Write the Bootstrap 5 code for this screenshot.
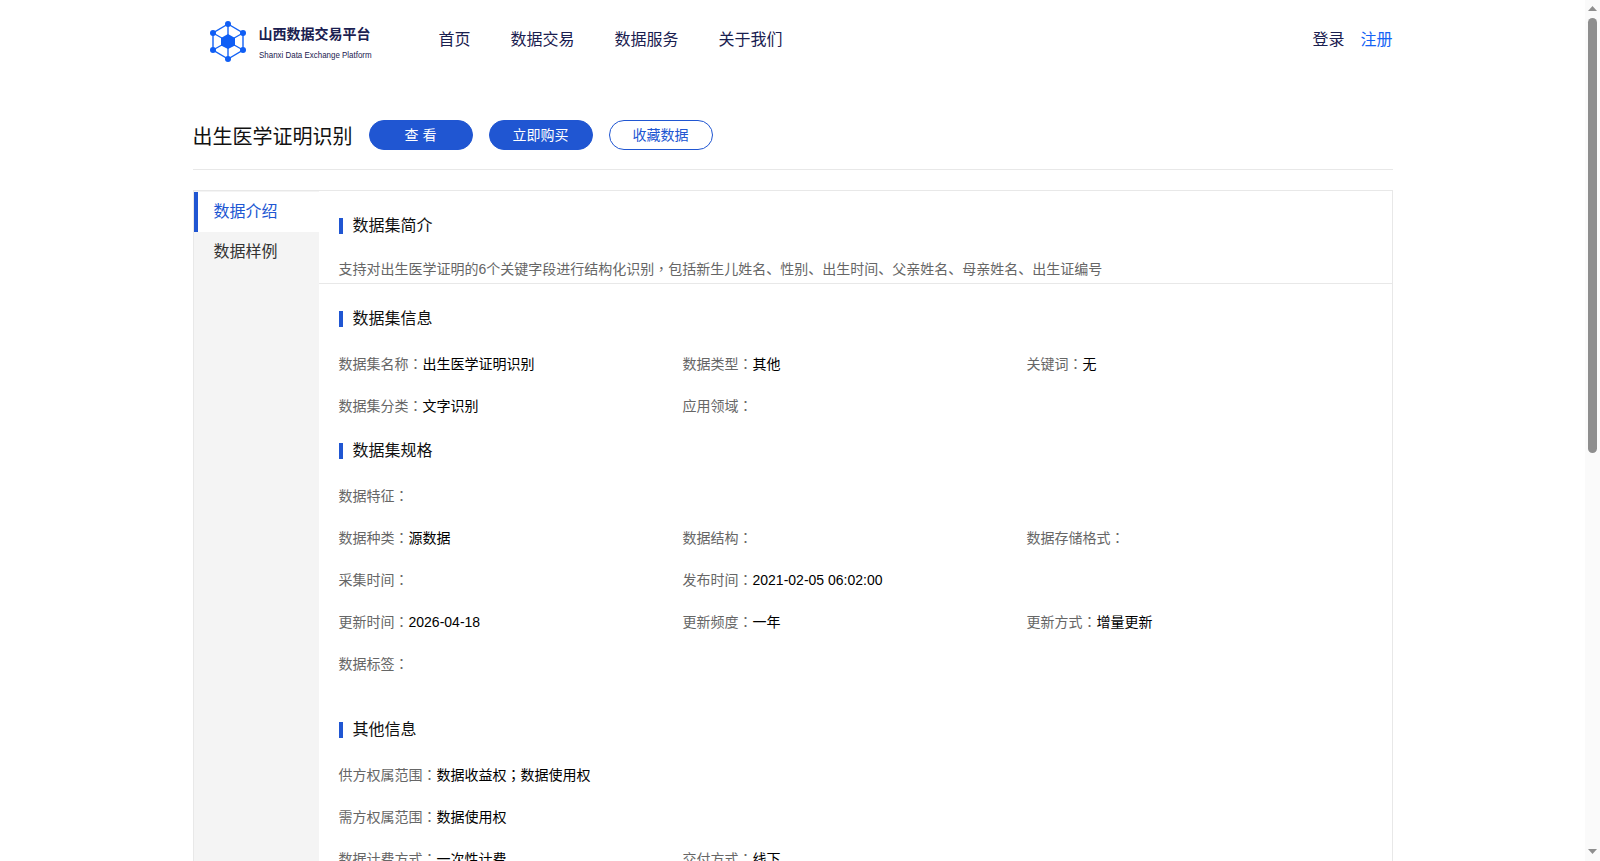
<!DOCTYPE html>
<html>
<head>
  <meta charset="UTF-8" />
  <meta name="viewport" content="width=device-width, initial-scale=1" />
  <title>出生医学证明识别 – 山西数据交易平台</title>
  <link href="https://cdn.jsdelivr.net/npm/bootstrap@5.3.0/dist/css/bootstrap.min.css" rel="stylesheet">
  <style>
    body {
      font-family: "Liberation Sans", "Noto Sans CJK SC", sans-serif;
      font-size: 14px;
      color: #000;
      background: #fff;
      padding-right: 15px;
    }

    .page-wrap { width: 1200px; margin: 0 auto; }

    .top-bar { height: 80px; }
    .brand-logo { width: 200px; padding-left: 17px; gap: 13px; }
    .brand-logo svg { margin-top: 2px; flex: none; }
    .brand-name { font-size: 14px; font-weight: 700; color: #1a2050; line-height: 18px; margin-top: 6px; }
    .brand-en { font-size: 9.7px; color: #1a2050; line-height: 12px; margin-top: 6px; white-space: nowrap; transform: scaleX(.82); transform-origin: left center; }

    .top-nav { margin-left: 46px; gap: 40px; }
    .top-nav a { font-size: 16px; color: #1a2050; text-decoration: none; }
    .auth-links { gap: 16px; }
    .auth-links a { font-size: 16px; color: #1a2050; text-decoration: none; }
    .auth-links a.reg { color: #1463f5; }

    .title-row { height: 90px; padding-top: 40px; border-bottom: 1px solid #e8e8e8; gap: 16px; }
    .title-row h1 { font-size: 20px; font-weight: 400; margin: 0; line-height: 34px; color: #111; }
    .pill-btn {
      width: 104px; height: 30px; padding: 0; font-size: 14px; line-height: 28px;
      border-radius: 15px; border: 1px solid #2056d2; background: #2056d2; color: #fff;
    }
    .pill-btn.plain { background: #fff; color: #2056d2; }

    .detail-box { margin-top: 20px; border: 1px solid #e8e8e8; border-bottom: 0; }
    .side-menu { width: 125px; background: #f4f4f4; flex: none; padding-top: 1px; }
    .side-menu a { display: block; height: 40px; line-height: 40px; padding-left: 16px; font-size: 16px; color: #333; text-decoration: none; border-left: 4px solid transparent; }
    .side-menu a.on { background: #fff; color: #2056d2; border-left-color: #2056d2; }

    .detail-main { flex: 1; min-width: 0; }
    .sec-block { padding: 27px 20px 0; }
    .sec-block.ruled { border-bottom: 1px solid #e8e8e8; }
    .sec-block.tight { padding-top: 16px; }
    .sec-block.wide { padding-top: 37px; }
    .sec-title { font-size: 16px; line-height: 16px; color: #111; border-left: 4px solid #2056d2; padding-left: 10px; margin: 0 0 16px; font-weight: 400; height: 16px; }
    .sec-text { color: #666; margin: 24px 0 3px; line-height: 21px; }
    .info-row { height: 42px; align-items: center; }
    .info-cell { width: 344px; flex: none; color: #666; white-space: nowrap; }
    .info-cell span { color: #000; }
    /* this face centres full-width punctuation like the reference does */
    .info-cell i, .sec-text i { font-family: "Noto Sans CJK TC", sans-serif; font-style: normal; }

    .fake-scroll { position: fixed; top: 0; right: 0; bottom: 0; width: 15px; background: #fafafa; }
    .fake-scroll .thumb { position: absolute; left: 3px; top: 18px; width: 9px; height: 435px; border-radius: 5px; background: #8e8e8e; }
    .fake-scroll svg { position: absolute; left: 3px; }
  </style>
</head>
<body>

  <div class="page-wrap">
    <div class="top-bar d-flex align-items-center">
      <div class="brand-logo d-flex align-items-center">
        <svg width="36" height="41" viewBox="0 0 36 41" fill="none">
          <g stroke="#1463f5" stroke-width="1.4">
            <polygon points="18,3 33,12 33,29 18,38 3,29 3,12"/>
            <path d="M18 3V38M3 12L33 29M33 12L3 29"/>
          </g>
          <polygon points="18,13 25,17 25,24.500 18,28 11,24.500 11,17" fill="#0f5ef5"/>
          <g fill="#0f5ef5">
            <circle cx="18" cy="3" r="3"/><circle cx="33" cy="12" r="3"/><circle cx="33" cy="29" r="3"/>
            <circle cx="18" cy="38" r="3"/><circle cx="3" cy="29" r="3"/><circle cx="3" cy="12" r="3"/>
          </g>
        </svg>
        <div>
          <div class="brand-name">山西数据交易平台</div>
          <div class="brand-en">Shanxi Data Exchange Platform</div>
        </div>
      </div>
      <nav class="top-nav d-flex">
        <a href="#">首页</a>
        <a href="#">数据交易</a>
        <a href="#">数据服务</a>
        <a href="#">关于我们</a>
      </nav>
      <div class="auth-links d-flex ms-auto">
        <a href="#">登录</a>
        <a class="reg" href="#">注册</a>
      </div>
    </div>

    <div class="title-row d-flex align-items-start">
      <h1>出生医学证明识别</h1>
      <button class="btn pill-btn">查 看</button>
      <button class="btn pill-btn">立即购买</button>
      <button class="btn pill-btn plain">收藏数据</button>
    </div>

    <div class="detail-box d-flex">
      <div class="side-menu">
        <a class="on" href="#">数据介绍</a>
        <a href="#">数据样例</a>
      </div>
      <div class="detail-main">
        <div class="sec-block ruled">
          <h5 class="sec-title">数据集简介</h5>
          <p class="sec-text">支持对出生医学证明的6个关键字段进行结构化识别<i>，</i>包括新生儿姓名、性别、出生时间、父亲姓名、母亲姓名、出生证编号</p>
        </div>
        <div class="sec-block">
          <h5 class="sec-title">数据集信息</h5>
          <div class="d-flex info-row"><div class="info-cell">数据集名称<i>：</i><span>出生医学证明识别</span></div><div class="info-cell">数据类型<i>：</i><span>其他</span></div><div class="info-cell">关键词<i>：</i><span>无</span></div></div>
          <div class="d-flex info-row"><div class="info-cell">数据集分类<i>：</i><span>文字识别</span></div><div class="info-cell">应用领域<i>：</i></div></div>
        </div>
        <div class="sec-block tight">
          <h5 class="sec-title">数据集规格</h5>
          <div class="d-flex info-row"><div class="info-cell">数据特征<i>：</i></div></div>
          <div class="d-flex info-row"><div class="info-cell">数据种类<i>：</i><span>源数据</span></div><div class="info-cell">数据结构<i>：</i></div><div class="info-cell">数据存储格式<i>：</i></div></div>
          <div class="d-flex info-row"><div class="info-cell">采集时间<i>：</i></div><div class="info-cell">发布时间<i>：</i><span>2021-02-05 06:02:00</span></div></div>
          <div class="d-flex info-row"><div class="info-cell">更新时间<i>：</i><span>2026-04-18</span></div><div class="info-cell">更新频度<i>：</i><span>一年</span></div><div class="info-cell">更新方式<i>：</i><span>增量更新</span></div></div>
          <div class="d-flex info-row"><div class="info-cell">数据标签<i>：</i></div></div>
        </div>
        <div class="sec-block wide">
          <h5 class="sec-title">其他信息</h5>
          <div class="d-flex info-row"><div class="info-cell">供方权属范围<i>：</i><span>数据收益权<i>；</i>数据使用权</span></div></div>
          <div class="d-flex info-row"><div class="info-cell">需方权属范围<i>：</i><span>数据使用权</span></div></div>
          <div class="d-flex info-row"><div class="info-cell">数据计费方式<i>：</i><span>一次性计费</span></div><div class="info-cell">交付方式<i>：</i><span>线下</span></div></div>
        </div>
      </div>
    </div>
  </div>

  <div class="fake-scroll">
    <svg style="top:6px" width="9" height="5" viewBox="0 0 9 5"><path d="M4.500 0L9 5H0z" fill="#8e8e8e"/></svg>
    <div class="thumb"></div>
    <svg style="top:849px" width="9" height="5" viewBox="0 0 9 5"><path d="M0 0H9L4.500 5z" fill="#8e8e8e"/></svg>
  </div>

  <script src="https://cdn.jsdelivr.net/npm/bootstrap@5.3.0/dist/js/bootstrap.bundle.min.js"></script>
</body>
</html>
